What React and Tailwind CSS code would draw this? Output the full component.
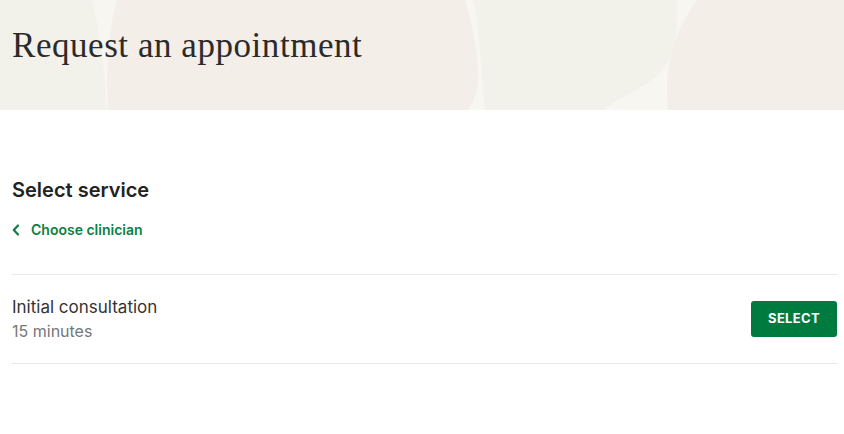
export default function App() {
  return (
    <div className="min-h-[434px] bg-white" style={{ fontFamily: 'Inter, "Noto Sans", sans-serif' }}>
      {/* Header */}
      <div className="relative h-[110px] overflow-hidden bg-[#f7f6f1]">
        <svg className="absolute inset-0 h-full w-full" viewBox="0 0 844 110" preserveAspectRatio="none">
          <path d="M0 0 H92 C100 35 106 70 106 110 H0 Z" fill="#f3f2ea" />
          <path d="M117 0 H465 C474 30 479 60 478 82 C477 95 472 104 468 110 H108 C106 70 108 30 117 0 Z" fill="#f3eee7" />
          <path d="M473 0 H677 C678 28 676 48 667 64 C652 88 620 94 605 110 H485 C480 75 481 32 473 0 Z" fill="#f3f2ea" />
          <path d="M697 0 H844 V110 H668 C664 70 672 35 697 0 Z" fill="#f3eee7" />
        </svg>
        <h1
          className="relative pl-3 pt-[25px] text-[35px] leading-[42px] tracking-[0.55px] text-[#2b2b2b]"
          style={{ fontFamily: '"Liberation Serif", "DejaVu Serif", serif' }}
        >
          Request an appointment
        </h1>
      </div>

      {/* Body */}
      <div className="pl-3 pr-[7px] pt-[66px]">
        <h2 className="text-[20px] font-semibold leading-7 text-[#222]">Select service</h2>
        <button className="mt-4 flex items-center gap-[11px] text-[14px] font-semibold leading-5 text-[#0b8043]">
          <svg className="h-[12px] w-[8px]" viewBox="0 0 8 12" fill="none" stroke="currentColor" strokeWidth="2.2" strokeLinecap="round" strokeLinejoin="round">
            <path d="M6 1.5 L1.8 6 L6 10.5" />
          </svg>
          Choose clinician
        </button>

        <div className="mt-[34px] border-t border-[#e8e8e8]" />
        <div className="flex items-center justify-between border-b border-[#e8e8e8] py-5">
          <div>
            <div className="text-[17px] leading-6 text-[#333]">Initial consultation</div>
            <div className="text-[16px] leading-6 text-[#777]">15 minutes</div>
          </div>
          <button className="h-9 w-[86px] rounded-[3px] bg-[#007b40] text-[13px] font-bold tracking-wide text-white">
            SELECT
          </button>
        </div>
      </div>
    </div>
  );
}
